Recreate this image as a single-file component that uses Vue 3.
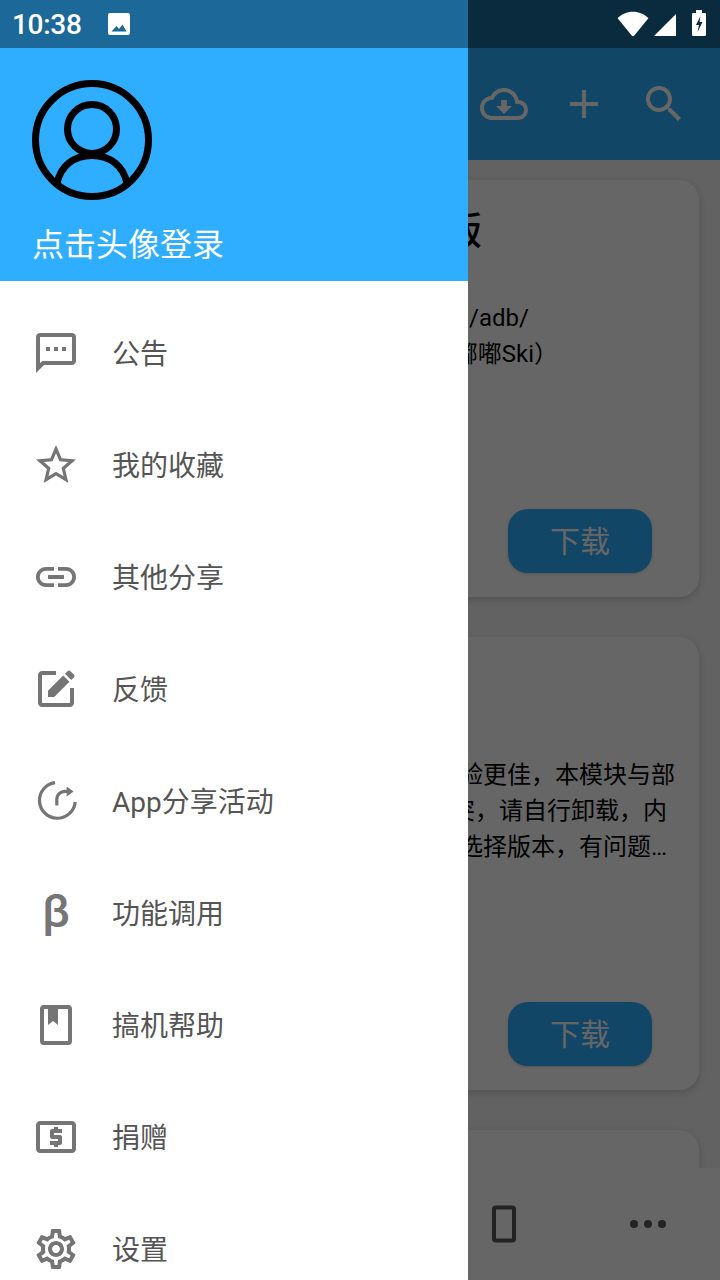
<script setup>
const menu = [
  { label: '公告', d: 'M20 2H4c-1.1 0-1.99.9-1.99 2L2 22l4-4h14c1.1 0 2-.9 2-2V4c0-1.1-.9-2-2-2zm0 14H5.17L4 17.17V4h16v12zM7 9h2v2H7zm4 0h2v2h-2zm4 0h2v2h-2z' },
  { label: '我的收藏', d: 'M22 9.24l-7.19-.62L12 2 9.19 8.63 2 9.24l5.46 4.73L5.82 21 12 17.27 18.18 21l-1.63-7.03L22 9.24zM12 15.4l-3.76 2.27 1-4.28-3.32-2.88 4.38-.38L12 6.1l1.71 4.04 4.38.38-3.32 2.88 1 4.28L12 15.4z' },
  { label: '其他分享', d: 'M3.9 12c0-1.71 1.39-3.1 3.1-3.1h4V7H7c-2.76 0-5 2.24-5 5s2.24 5 5 5h4v-1.9H7c-1.71 0-3.1-1.39-3.1-3.1zM8 13h8v-2H8v2zm9-6h-4v1.9h4c1.71 0 3.1 1.39 3.1 3.1s-1.39 3.1-3.1 3.1h-4V17h4c2.76 0 5-2.24 5-5s-2.24-5-5-5z' },
  { label: '反馈', d: 'M19 19H5V5h7V3H5c-1.1 0-2 .9-2 2v14c0 1.1.9 2 2 2h14c1.1 0 2-.9 2-2v-7.500h-2V19zM8 16v-3.100l7.600-7.600 3.100 3.100L11.100 16H8zM16.500 4.400l1.300-1.300c.4-.4 1-.4 1.400 0l1.700 1.700c.4.4.4 1 0 1.400l-1.300 1.300-3.100-3.100z' },
  { label: 'App分享活动', share: true },
  { label: '功能调用', beta: true },
  { label: '搞机帮助', d: 'M18 2H6a2 2 0 0 0-2 2v16a2 2 0 0 0 2 2h12a2 2 0 0 0 2-2V4a2 2 0 0 0-2-2zM6 4h2v8l2.5-2 2.5 2V4h5v16H6z' },
  { label: '捐赠', d: 'M20 4H4c-1.11 0-1.99.89-1.99 2L2 18c0 1.11.89 2 2 2h16c1.11 0 2-.89 2-2V6c0-1.11-.89-2-2-2zm0 14H4V6h16v12zM11 17h2v-1h1c.55 0 1-.45 1-1v-3c0-.55-.45-1-1-1h-3v-1h4V8h-2V7h-2v1h-1c-.55 0-1 .45-1 1v3c0 .55.45 1 1 1h3v1H9v2h2v1z' },
  { label: '设置', d: 'M19.43 12.98c.04-.32.07-.64.07-.98 0-.34-.03-.66-.07-.98l2.11-1.65c.19-.15.24-.42.12-.64l-2-3.46c-.09-.16-.26-.25-.44-.25-.06 0-.12.01-.17.03l-2.49 1c-.52-.4-1.08-.73-1.69-.98l-.38-2.65C14.46 2.18 14.25 2 14 2h-4c-.25 0-.46.18-.49.42l-.38 2.65c-.61.25-1.17.59-1.69.98l-2.49-1c-.06-.02-.12-.03-.18-.03-.17 0-.34.09-.43.25l-2 3.46c-.13.22-.07.49.12.64l2.11 1.65c-.04.32-.07.65-.07.98 0 .33.03.66.07.98l-2.11 1.65c-.19.15-.24.42-.12.64l2 3.46c.09.16.26.25.44.25.06 0 .12-.01.17-.03l2.49-1c.52.4 1.08.73 1.69.98l.38 2.65c.03.24.24.42.49.42h4c.25 0 .46-.18.49-.42l.38-2.65c.61-.25 1.17-.59 1.69-.98l2.49 1c.06.02.12.03.18.03.17 0 .34-.09.43-.25l2-3.46c.12-.22.07-.49-.12-.64l-2.11-1.65zm-1.98-1.71c.04.31.05.52.05.73 0 .21-.02.43-.05.73l-.14 1.13.89.7 1.08.84-.7 1.21-1.27-.51-1.04-.42-.9.68c-.43.32-.84.56-1.25.73l-1.06.43-.16 1.13-.2 1.35h-1.4l-.19-1.35-.16-1.13-1.06-.43c-.43-.18-.83-.41-1.23-.71l-.91-.7-1.06.43-1.27.51-.7-1.21 1.08-.84.89-.7-.14-1.13c-.03-.31-.05-.54-.05-.74s.02-.43.05-.73l.14-1.13-.89-.7-1.08-.84.7-1.21 1.27.51 1.04.42.9-.68c.43-.32.84-.56 1.25-.73l1.06-.43.16-1.13.2-1.35h1.39l.19 1.35.16 1.13 1.06.43c.43.18.83.41 1.23.71l.91.7 1.06-.43 1.27-.51.7 1.21-1.07.85-.89.7.14 1.13zM12 8c-2.21 0-4 1.79-4 4s1.79 4 4 4 4-1.79 4-4-1.79-4-4-4zm0 6c-1.1 0-2-.9-2-2s.9-2 2-2 2 .9 2 2-.9 2-2 2z' }
]

const actions = [
  'M19.35 10.04C18.67 6.59 15.64 4 12 4 9.11 4 6.6 5.64 5.35 8.04 2.34 8.36 0 10.91 0 14c0 3.31 2.69 6 6 6h13c2.76 0 5-2.24 5-5 0-2.64-2.05-4.78-4.65-4.96zM19 18H6c-2.21 0-4-1.79-4-4 0-2.05 1.53-3.76 3.56-3.97l1.07-.11.5-.95C8.08 7.14 9.94 6 12 6c2.62 0 4.88 1.86 5.39 4.43l.3 1.5 1.53.11c1.56.1 2.78 1.41 2.78 2.96 0 1.65-1.35 3-3 3zm-5.55-8h-2.9v3H8l4 4 4-4h-2.55z',
  'M19 13h-6v6h-2v-6H5v-2h6V5h2v6h6v2z',
  'M15.5 14h-.79l-.28-.27C15.41 12.59 16 11.11 16 9.5 16 5.91 13.09 3 9.5 3S3 5.91 3 9.5 5.91 16 9.5 16c1.61 0 3.09-.59 4.23-1.57l.27.28v.79l5 4.99L20.49 19l-4.99-5zm-6 0C7.01 14 5 11.99 5 9.5S7.01 5 9.5 5 14 7.01 14 9.5 11.99 14 9.5 14z'
]

const tabs = [
  'M10 20v-6h4v6h5v-8h3L12 3 2 12h3v8z',
  'M4 4h7v7H4zm9 0h7v7h-7zM4 13h7v7H4zm9 0h7v7h-7z',
  'M19.35 10.04C18.67 6.59 15.64 4 12 4 9.11 4 6.6 5.64 5.35 8.04 2.34 8.36 0 10.91 0 14c0 3.31 2.69 6 6 6h13c2.76 0 5-2.24 5-5 0-2.64-2.05-4.78-4.65-4.96z',
  'M8 2.75h8a2 2 0 0 1 2 2v14.5a2 2 0 0 1-2 2H8a2 2 0 0 1-2-2V4.75a2 2 0 0 1 2-2zM8 4.75v14.5h8V4.75z',
  'M5 10a2 2 0 1 0 0 4 2 2 0 0 0 0-4zm7 0a2 2 0 1 0 0 4 2 2 0 0 0 0-4zm7 0a2 2 0 1 0 0 4 2 2 0 0 0 0-4z'
]
</script>

<template>
  <div class="screen">
    <!-- page behind the drawer -->
    <div class="app">
      <div class="toolbar">
        <svg v-for="d in actions" :key="d" class="icon-48" viewBox="0 0 24 24"><path :d="d" fill="#fff" /></svg>
      </div>
      <div class="list">
        <div class="card card-short">
          <div class="card-title">刷机包完整版</div>
          <div class="card-text">
            <div class="line line-a">路径 /sdcard/adb/</div>
            <div class="line line-b">作者（嘟嘟Ski）</div>
          </div>
          <button type="button" class="download">下载</button>
        </div>
        <div class="card card-tall">
          <div class="card-text card-text-tall">
            <div class="line line-c">体验更佳，本模块与部</div>
            <div class="line line-d">冲突，请自行卸载，内</div>
            <div class="line line-e">选择版本，有问题…</div>
          </div>
          <button type="button" class="download">下载</button>
        </div>
        <div class="card card-next"></div>
      </div>
      <div class="tabbar">
        <div v-for="d in tabs" :key="d" class="tab">
          <svg class="icon-48" viewBox="0 0 24 24"><path :d="d" fill="#585858" fill-rule="evenodd" /></svg>
        </div>
      </div>
    </div>

    <div class="scrim"></div>

    <!-- navigation drawer -->
    <aside class="drawer">
      <header class="drawer-head">
        <svg class="avatar" viewBox="0 0 120 120" fill="none" stroke="#000" stroke-width="7">
          <circle cx="60" cy="60" r="56.5" />
          <circle cx="60" cy="49" r="24.5" />
          <path d="M25 104C28 86 42 75.5 60 75.5S92 86 95 104" />
        </svg>
        <div class="login">点击头像登录</div>
      </header>
      <nav class="menu">
        <div v-for="item in menu" :key="item.label" class="menu-item">
          <span v-if="item.beta" class="icon-48 beta">β</span>
          <svg v-else-if="item.share" class="icon-48" viewBox="0 0 24 24">
            <g fill="none" stroke="#757575" stroke-width="1.6">
              <path d="M11.500 2.800A8.950 8.950 0 1 0 21.600 12.500" />
              <path d="M12.400 14.300V11.200a4 4 0 0 1 4-4h1.500" />
            </g>
            <path d="M17.300 4.700l3.500 2.500-3.500 2.500z" fill="#757575" />
          </svg>
          <svg v-else class="icon-48" viewBox="0 0 24 24"><path :d="item.d" fill="#757575" fill-rule="evenodd" /></svg>
          <span class="menu-label">{{ item.label }}</span>
        </div>
      </nav>
    </aside>

    <!-- status bar sits over everything -->
    <div class="status">
      <div class="status-left">
        <span class="time">10:38</span>
        <svg class="pic" width="22" height="22" viewBox="0 0 22 22">
          <path fill="#fff" fill-rule="evenodd" d="M2 0h18a2 2 0 0 1 2 2v18a2 2 0 0 1-2 2H2a2 2 0 0 1-2-2V2a2 2 0 0 1 2-2zM3.5 18.5h15L14.5 11.5l-3.5 4.5-2.5-3z" />
        </svg>
      </div>
      <div class="status-right">
        <svg width="32" height="26" viewBox="0 0 32 26"><path fill="#fff" d="M.6 7.2C4.6 3 10 .7 16 .7s11.400 2.300 15.400 6.500L17.300 24.400a1.700 1.700 0 0 1-2.600 0z" /></svg>
        <svg class="signal" width="22" height="22" viewBox="0 0 22 22"><path fill="#fff" d="M0 22 22 0v22z" /></svg>
        <svg class="battery" width="14" height="26" viewBox="0 0 14 26">
          <path fill="#fff" fill-rule="evenodd" d="M4 0h6v3h3a1 1 0 0 1 1 1v21a1 1 0 0 1-1 1H1a1 1 0 0 1-1-1V4a1 1 0 0 1 1-1h3zM8.500 6 4 15h3l-1.500 7L10.500 12H7.500z" />
        </svg>
      </div>
    </div>
  </div>
</template>

<style scoped>
.screen {
  position: relative;
  width: 720px;
  height: 1280px;
  overflow: hidden;
  background: #f5f5f5;
  font-family: Roboto, "Noto Sans CJK SC", sans-serif;
}

.app {
  height: 100%;
  display: flex;
  flex-direction: column;
}

.toolbar {
  flex: none;
  height: 160px;
  box-sizing: border-box;
  padding: 80px 32px 32px 0;
  background: #2faeff;
  display: flex;
  justify-content: flex-end;
  gap: 32px;
}

.icon-48 {
  display: block;
  flex: none;
  width: 48px;
  height: 48px;
}

/* ===== Cards ===== */
.list {
  flex: 1;
  min-height: 0;
  overflow: hidden;
  padding: 20px 21px 0 20px;
  display: flex;
  flex-direction: column;
  gap: 40px;
}

.card {
  flex: none;
  box-sizing: border-box;
  background: #fff;
  border-radius: 20px;
  box-shadow: 0 3px 8px rgba(0, 0, 0, 0.16);
  padding: 0 47px 24px 24px;
  display: flex;
  flex-direction: column;
}

.card-short {
  height: 417px;
}

.card-tall {
  height: 453px;
}

.card-next {
  height: 300px;
}

.card-title {
  margin-top: 27px;
  font-size: 38px;
  font-weight: 500;
  line-height: 48px;
  color: #000;
  text-align: right;
  margin-right: 170px;
  white-space: nowrap;
}

.card-text {
  margin-top: 45px;
  font-size: 24px;
  line-height: 36px;
  color: #000;
}

.card-text-tall {
  margin-top: 120px;
}

.line {
  white-space: nowrap;
  text-align: right;
}

.line-a {
  margin-right: 123px;
}

.line-b {
  margin-right: 94px;
}

.line-c {
  margin-right: -23px;
}

.line-d {
  margin-right: -15px;
}

.line-e {
  margin-right: -15px;
}

.download {
  flex: none;
  margin-top: auto;
  align-self: flex-end;
  width: 144px;
  height: 64px;
  border: none;
  border-radius: 20px;
  padding: 0 0 4px;
  background: #2faeff;
  color: #fff;
  font-family: inherit;
  font-size: 30px;
  box-shadow: 0 1px 3px rgba(0, 0, 0, 0.2);
}

/* ===== Bottom tabs ===== */
.tabbar {
  flex: none;
  height: 112px;
  background: #fff;
  display: grid;
  grid-template-columns: repeat(5, 1fr);
}

.tab {
  display: flex;
  align-items: center;
  justify-content: center;
}

/* ===== Overlays ===== */
.scrim {
  position: absolute;
  inset: 0;
  background: rgba(0, 0, 0, 0.6);
}

.drawer {
  position: absolute;
  top: 0;
  left: 0;
  bottom: 0;
  width: 468px;
  background: #fff;
  overflow: hidden;
}

.drawer-head {
  height: 281px;
  box-sizing: border-box;
  padding: 80px 32px 0;
  background: #2faeff;
}

.avatar {
  display: block;
  width: 120px;
  height: 120px;
}

.login {
  margin-top: 25px;
  font-size: 32px;
  line-height: 40px;
  color: #fff;
  white-space: nowrap;
}

.menu {
  padding-top: 16px;
}

.menu-item {
  height: 112px;
  box-sizing: border-box;
  padding-left: 32px;
  display: flex;
  align-items: center;
  gap: 32px;
}

.menu-label {
  margin-top: 4px;
  font-size: 28px;
  line-height: 40px;
  color: #555;
  white-space: nowrap;
}

.beta {
  font-size: 47px;
  font-weight: 500;
  line-height: 44px;
  color: #757575;
  text-align: center;
}

.status {
  position: absolute;
  top: 0;
  left: 0;
  right: 0;
  height: 48px;
  padding: 0 14px 0 12px;
  box-sizing: border-box;
  background: rgba(0, 0, 0, 0.4);
  display: flex;
  align-items: center;
  justify-content: space-between;
}

.status-left,
.status-right {
  display: flex;
  align-items: center;
}

.time {
  font-size: 28px;
  font-weight: 500;
  letter-spacing: -0.3px;
  color: #fff;
}

.pic {
  margin-left: 26.5px;
}

.signal {
  margin-left: 5px;
  margin-top: 2px;
}

.battery {
  margin-left: 16px;
  margin-top: -2px;
}
</style>
